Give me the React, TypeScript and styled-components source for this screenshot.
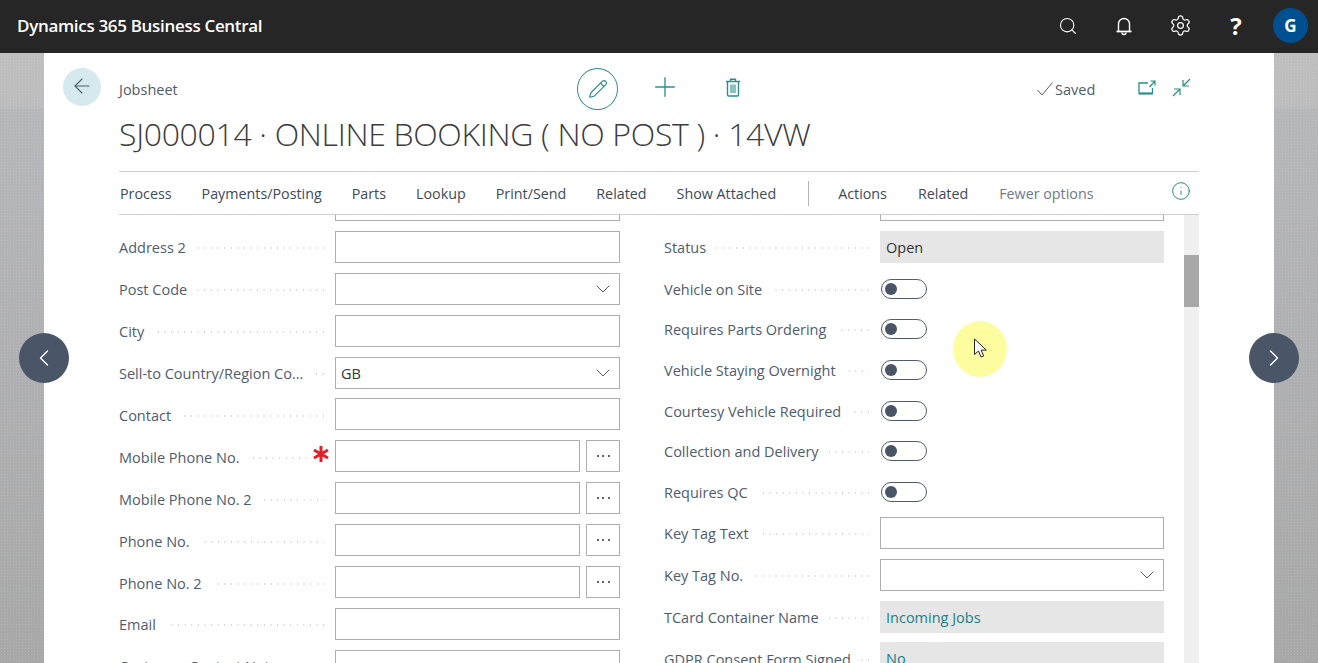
import styled, { createGlobalStyle } from "styled-components";
import { ArrowLeft, ChevronDown, ChevronLeft, ChevronRight, Info, Pencil, Plus, Search, Settings } from "lucide-react";

const Global = createGlobalStyle`
  html, body {
    margin: 0;
    height: 100%;
    overflow: hidden;
  }
  body {
    font-family: "Open Sans", "Noto Sans", sans-serif;
    font-size: 14.5px;
    color: #505c6d;
  }
`;

const Page = styled.div`
  position: relative;
  height: 663px;
  display: flex;
  flex-direction: column;
  overflow: hidden;
`;

const TopBar = styled.header`
  height: 53px;
  flex: none;
  background: #262626;
  color: #fff;
  display: flex;
  align-items: center;
  padding: 0 10px 2px 17px;
  box-sizing: border-box;
`;

const Brand = styled.div`
  font-size: 17px;
  font-weight: 600;
  letter-spacing: -0.32px;
  flex: 1;
`;

const BarIcons = styled.div`
  display: flex;
  align-items: center;
`;

const BarIcon = styled.span`
  width: 56px;
  display: flex;
  justify-content: center;
  align-items: center;
  font-size: 24px;
  font-weight: 700;
`;

const Avatar = styled.span`
  width: 35px;
  height: 35px;
  margin-left: 9px;
  border-radius: 50%;
  background: #004f90;
  display: flex;
  justify-content: center;
  align-items: center;
  font-size: 17px;
  font-weight: 700;
`;

const Stage = styled.div`
  flex: 1;
  min-height: 0;
  padding: 0 44px;
  background-image:
    radial-gradient(rgba(255, 255, 255, 0.12) 0.7px, transparent 0.8px),
    linear-gradient(180deg, #c0bfbf 0, #bcbcbc 55px, #b6b7ba 56px, #a8a8a8 100%);
  background-size: 3px 3px, 100% 100%;
`;

const Card = styled.main`
  height: 100%;
  background: #fff;
  display: flex;
  padding: 15px 0 0 19px;
  box-sizing: border-box;
  gap: 18px;
`;

const BackButton = styled.span`
  width: 38px;
  height: 38px;
  flex: none;
  border-radius: 50%;
  background: #d5e9ee;
  color: #505c6d;
  display: flex;
  justify-content: center;
  align-items: center;
  padding-bottom: 3px;
  box-sizing: border-box;
`;

const Main = styled.div`
  width: 1080px;
  display: flex;
  flex-direction: column;
  min-height: 0;
`;

const HeaderRow = styled.div`
  height: 42px;
  display: flex;
  align-items: center;
  color: #2a8f8a;
`;

const Crumb = styled.div`
  width: 458px;
  flex: none;
  color: #505c6d;
`;

const EditCircle = styled.span`
  width: 41px;
  height: 42px;
  box-sizing: border-box;
  border: 1px solid #2a8f8a;
  border-radius: 50%;
  display: flex;
  justify-content: center;
  align-items: center;
`;

const HeaderAction = styled.span<{ $left: number }>`
  margin-left: ${(p) => p.$left}px;
  width: 20px;
  height: 20px;
  margin-bottom: 4px;
  display: flex;
  justify-content: center;
  align-items: center;

  svg {
    flex: none;
  }
`;

const SavedState = styled.div`
  margin-left: 294px;
  width: 59px;
  flex: none;
  display: flex;
  align-items: center;
  gap: 2px;
  color: #505c6d;
`;

const Title = styled.h1`
  margin: 0;
  height: 61px;
  flex: none;
  font-size: 32px;
  font-weight: 300;
  letter-spacing: -0.32px;
  line-height: 48px;
  color: #3c3c3c;
  white-space: nowrap;
`;

const Ribbon = styled.nav`
  height: 44px;
  flex: none;
  box-sizing: border-box;
  border-top: 1px solid #cfcfcf;
  border-bottom: 1px solid #cfcfcf;
  display: flex;
  align-items: center;
  padding-left: 1px;
  font-size: 14.3px;
`;

const RibbonItem = styled.span<{ $muted?: boolean; $gap: number }>`
  margin-right: ${(p) => p.$gap}px;
  color: ${(p) => (p.$muted ? "#6f7a88" : "#3f4a58")};
  white-space: nowrap;
`;

const RibbonDivider = styled.span`
  width: 1px;
  height: 25px;
  background: #b5b5b5;
  margin-right: 29px;
`;

const RibbonInfo = styled.span`
  margin-left: auto;
  margin-right: 8px;
  margin-bottom: 4px;
  display: flex;
  color: #2a8f8a;
`;

const Body = styled.div`
  flex: 1;
  min-height: 0;
  display: flex;
  overflow: hidden;
`;

const FormArea = styled.div`
  flex: 1;
  min-width: 0;
  overflow: hidden;
`;

const Columns = styled.div`
  margin-top: -26px;
  display: grid;
  grid-template-columns: 501px 500px;
  column-gap: 44px;
`;

const Column = styled.div`
  display: flex;
  flex-direction: column;
  gap: 9.9px;
`;

const Row = styled.div<{ $toggle?: boolean }>`
  display: grid;
  height: ${(p) => (p.$toggle ? "30.78px" : "32px")};
  align-items: center;
  grid-template-columns: 216px 1fr;
`;

const LabelCell = styled.div<{ $required?: boolean }>`
  display: flex;
  align-items: center;
  padding-right: ${(p) => (p.$required ? 6 : 11)}px;
  padding-top: 2px;
  min-width: 0;
  white-space: nowrap;
`;

const Leader = styled.span`
  flex: 1;
  min-width: 0;
  height: 2px;
  margin: 1px 0 0 10px;
  background-image: linear-gradient(to left, #d0d3d7 1.4px, transparent 1.4px);
  background-size: 6.6px 2px;
  background-position: right;
`;

const Required = styled.span`
  display: flex;
  margin-left: 6px;
  margin-top: -6px;
  color: #e0202a;
`;

const FieldLine = styled.div`
  display: flex;
  gap: 6px;
`;

const InputBox = styled.div<{ $readOnly?: boolean; $link?: boolean }>`
  flex: 1;
  height: 32px;
  box-sizing: border-box;
  padding: 1px 4px 0 5px;
  display: flex;
  align-items: center;
  justify-content: space-between;
  border: 1px solid ${(p) => (p.$readOnly ? "#e6e6e6" : "#adadad")};
  background: ${(p) => (p.$readOnly ? "#e6e6e6" : "#fff")};
  color: ${(p) => (p.$link ? "#1b7f86" : "#333")};
`;

const Caret = styled(ChevronDown)`
  color: #505c6d;
  margin-top: -1px;
`;

const DotsButton = styled.div`
  width: 34px;
  height: 32px;
  flex: none;
  box-sizing: border-box;
  border: 1px solid #adadad;
  display: flex;
  justify-content: center;
  align-items: center;
  gap: 3.5px;
`;

const Dot = styled.i`
  width: 2px;
  height: 2px;
  border-radius: 50%;
  background: #333;
`;

const Toggle = styled.div`
  width: 46px;
  height: 20px;
  margin: 1px 0 0 1px;
  box-sizing: border-box;
  border: 1px solid #505c6d;
  border-radius: 10px;
  padding-left: 3px;
  display: flex;
  align-items: center;
`;

const Knob = styled.i`
  width: 12px;
  height: 12px;
  border-radius: 50%;
  background: #4a5568;
`;

const ScrollTrack = styled.div`
  width: 15px;
  flex: none;
  background: #f0f0f0;
  padding-top: 40px;
`;

const ScrollThumb = styled.div`
  height: 52px;
  background: #a8a8a8;
`;

const PagerButton = styled.span<{ $side: "left" | "right" }>`
  position: absolute;
  top: 333px;
  ${(p) => p.$side}: 19px;
  width: 50px;
  height: 50px;
  border-radius: 50%;
  background: #4a5568;
  color: #fff;
  display: flex;
  justify-content: center;
  align-items: center;
`;

const CursorHalo = styled.span`
  position: absolute;
  left: 953px;
  top: 321px;
  width: 54px;
  height: 56px;
  border-radius: 50%;
  background: #fdfd9f;
`;

const CursorArrow = styled.svg`
  position: absolute;
  left: 973px;
  top: 338px;
`;

const BellIcon = () => (
  <svg width="18" height="20" viewBox="0 0 18 20" fill="none" stroke="currentColor" strokeWidth="1.4">
    <path d="M3.5 15V8a5.5 5.5 0 0 1 11 0v7" />
    <path d="M1.5 15.5h15" strokeWidth="1.7" />
    <path d="M7 16.5a2 2 0 0 0 4 0" />
  </svg>
);

const TrashIcon = () => (
  <svg width="16" height="19" viewBox="0 0 16 19" fill="none" stroke="currentColor" strokeWidth="1.4">
    <path d="M1 3.5h14M5.5 3.5V1.2h5v2.3M2.5 3.5v13.3c0 .7.5 1.2 1.2 1.2h8.6c.7 0 1.2-.5 1.2-1.2V3.5" />
    <path d="M6 6.5v8.5M8 6.5v8.5M10 6.5v8.5" strokeWidth="1.1" />
  </svg>
);

const OpenNewIcon = () => (
  <svg width="18" height="15" viewBox="0 0 18 15" fill="none" stroke="currentColor" strokeWidth="1.3">
    <path d="M10 3H1v10.5h13.5V8" />
    <path d="M1 13.5h13.5" strokeWidth="1.9" />
    <path d="M11.5 7l5-5.5M12.5 1H17v4.5" strokeWidth="1.2" />
  </svg>
);

const CollapseIcon = () => (
  <svg width="19" height="19" viewBox="0 0 19 19" fill="none" stroke="currentColor" strokeWidth="1.2">
    <path d="M1 18l6.5-6.5M2 11h6v6" />
    <path d="M18 1l-6.5 6.5M11 2v6h6" />
  </svg>
);

const CheckIcon = () => (
  <svg width="16" height="14" viewBox="0 0 16 14" fill="none" stroke="#505c6d" strokeWidth="1">
    <path d="M0.5 8l4.5 5L15.5 0.5" />
  </svg>
);

// first row of each column is scrolled away under the ribbon, only its box edge shows
const left: { label: string; kind?: "select" | "dots"; value?: string; required?: boolean }[] = [
  { label: "" },
  { label: "Address 2" },
  { label: "Post Code", kind: "select" },
  { label: "City" },
  { label: "Sell-to Country/Region Co...", kind: "select", value: "GB" },
  { label: "Contact" },
  { label: "Mobile Phone No.", kind: "dots", required: true },
  { label: "Mobile Phone No. 2", kind: "dots" },
  { label: "Phone No.", kind: "dots" },
  { label: "Phone No. 2", kind: "dots" },
  { label: "Email" },
  { label: "Customer Contact Notes" },
];

const toggles = [
  "Vehicle on Site",
  "Requires Parts Ordering",
  "Vehicle Staying Overnight",
  "Courtesy Vehicle Required",
  "Collection and Delivery",
  "Requires QC",
];

const ribbon: [string, number][] = [
  ["Process", 30],
  ["Payments/Posting", 30],
  ["Parts", 30],
  ["Lookup", 30],
  ["Print/Send", 30],
  ["Related", 30],
  ["Show Attached", 32],
];

const App = () => {
  return (
    <Page>
      <Global />
      <TopBar>
        <Brand>Dynamics 365 Business Central</Brand>
        <BarIcons>
          <BarIcon>
            <Search size={20} strokeWidth={1.3} />
          </BarIcon>
          <BarIcon>
            <BellIcon />
          </BarIcon>
          <BarIcon>
            <Settings size={23} strokeWidth={1.3} />
          </BarIcon>
          <BarIcon>?</BarIcon>
          <Avatar>G</Avatar>
        </BarIcons>
      </TopBar>
      <Stage>
        <Card>
          <BackButton>
            <ArrowLeft size={24} strokeWidth={1.1} />
          </BackButton>
          <Main>
            <HeaderRow>
              <Crumb>Jobsheet</Crumb>
              <EditCircle>
                <Pencil size={20} strokeWidth={1.4} />
              </EditCircle>
              <HeaderAction $left={37}>
                <Plus size={32} strokeWidth={1} />
              </HeaderAction>
              <HeaderAction $left={48}>
                <TrashIcon />
              </HeaderAction>
              <SavedState>
                <CheckIcon />
                Saved
              </SavedState>
              <HeaderAction $left={41}>
                <OpenNewIcon />
              </HeaderAction>
              <HeaderAction $left={14}>
                <CollapseIcon />
              </HeaderAction>
            </HeaderRow>
            <Title>SJ000014 · ONLINE BOOKING ( NO POST ) · 14VW</Title>
            <Ribbon>
              {ribbon.map(([name, gap]) => (
                <RibbonItem key={name} $gap={gap}>
                  {name}
                </RibbonItem>
              ))}
              <RibbonDivider />
              <RibbonItem $gap={31}>Actions</RibbonItem>
              <RibbonItem $gap={31}>Related</RibbonItem>
              <RibbonItem $gap={0} $muted>
                Fewer options
              </RibbonItem>
              <RibbonInfo>
                <Info size={20} strokeWidth={1.2} />
              </RibbonInfo>
            </Ribbon>
            <Body>
              <FormArea>
                <Columns>
                  <Column>
                    {left.map((f) => (
                      <Row key={f.label}>
                        <LabelCell $required={f.required}>
                          {f.label}
                          <Leader />
                          {f.required && (
                            <Required>
                              <svg width="16" height="16" viewBox="0 0 16 16" stroke="currentColor" strokeWidth="3">
                                <path d="M8 0v16M1 4l14 8M15 4L1 12" />
                              </svg>
                            </Required>
                          )}
                        </LabelCell>
                        <FieldLine>
                          <InputBox>
                            {f.value}
                            {f.kind === "select" && <span />}
                            {f.kind === "select" && <Caret size={24} strokeWidth={1} />}
                          </InputBox>
                          {f.kind === "dots" && (
                            <DotsButton>
                              <Dot />
                              <Dot />
                              <Dot />
                            </DotsButton>
                          )}
                        </FieldLine>
                      </Row>
                    ))}
                  </Column>
                  <Column>
                    <Row>
                      <LabelCell />
                      <InputBox />
                    </Row>
                    <Row>
                      <LabelCell>
                        Status
                        <Leader />
                      </LabelCell>
                      <InputBox $readOnly>Open</InputBox>
                    </Row>
                    {toggles.map((name) => (
                      <Row key={name} $toggle>
                        <LabelCell>
                          {name}
                          <Leader />
                        </LabelCell>
                        <Toggle>
                          <Knob />
                        </Toggle>
                      </Row>
                    ))}
                    <Row>
                      <LabelCell>
                        Key Tag Text
                        <Leader />
                      </LabelCell>
                      <InputBox />
                    </Row>
                    <Row>
                      <LabelCell>
                        Key Tag No.
                        <Leader />
                      </LabelCell>
                      <InputBox>
                        <span />
                        <Caret size={24} strokeWidth={1} />
                      </InputBox>
                    </Row>
                    <Row>
                      <LabelCell>
                        TCard Container Name
                        <Leader />
                      </LabelCell>
                      <InputBox $readOnly $link>
                        Incoming Jobs
                      </InputBox>
                    </Row>
                    <Row>
                      <LabelCell>
                        GDPR Consent Form Signed
                        <Leader />
                      </LabelCell>
                      <InputBox $readOnly $link>
                        No
                      </InputBox>
                    </Row>
                  </Column>
                </Columns>
              </FormArea>
              <ScrollTrack>
                <ScrollThumb />
              </ScrollTrack>
            </Body>
          </Main>
        </Card>
      </Stage>
      <PagerButton $side="left">
        <ChevronLeft size={28} strokeWidth={1.2} />
      </PagerButton>
      <PagerButton $side="right">
        <ChevronRight size={28} strokeWidth={1.2} />
      </PagerButton>
      <CursorHalo />
      <CursorArrow width="15" height="21" viewBox="0 0 15 21">
        <path d="M1.5 1v15.5l4-3.5 2.6 6 2.6-1.1-2.6-5.8h5.2z" fill="#fff" stroke="#222" strokeWidth="1" />
      </CursorArrow>
    </Page>
  );
};

export default App;
